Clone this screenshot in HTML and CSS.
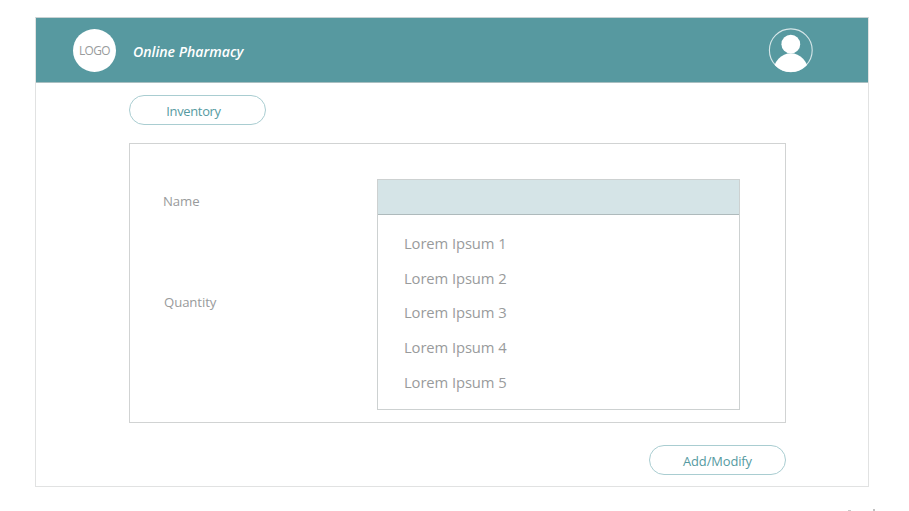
FILE: index.html
```html
<!DOCTYPE html>
<html lang="en">
<head>
<meta charset="utf-8">
<title>Online Pharmacy</title>
<link rel="stylesheet" href="styles.css">
</head>
<body>
<div class="window">
  <header class="header">
    <div class="logo">LOGO</div>
    <h1 class="title">Online Pharmacy</h1>
    <svg class="avatar" viewBox="0 0 46 46" aria-label="Profile">
      <defs><clipPath id="ring"><circle cx="22.8" cy="23.3" r="21.8"/></clipPath></defs>
      <circle cx="22.8" cy="23.3" r="21.4" fill="none" stroke="#d5e6e8" stroke-width="1.1"/>
      <circle cx="22.8" cy="17.2" r="9.4" fill="#fff"/>
      <ellipse cx="22.8" cy="45" rx="17.4" ry="18.8" fill="#fff" clip-path="url(#ring)"/>
    </svg>
  </header>
  <main class="content">
    <button class="pill"><span class="inventory">Inventory</span></button>
    <section class="panel">
      <div class="labels">
        <label class="name">Name</label>
        <label class="quantity">Quantity</label>
      </div>
      <div class="dropdown">
        <div class="field"></div>
        <ul class="options">
          <li>Lorem Ipsum 1</li>
          <li>Lorem Ipsum 2</li>
          <li>Lorem Ipsum 3</li>
          <li>Lorem Ipsum 4</li>
          <li>Lorem Ipsum 5</li>
        </ul>
      </div>
    </section>
    <button class="pill submit"><span class="modify">Add/Modify</span></button>
  </main>
</div>
<footer class="edge"><i class="dash"></i><i class="tick"></i></footer>
</body>
</html>
```
FILE: styles.css
```css
* { box-sizing: border-box; }
body {
  margin: 0;
  height: 511px;
  padding: 17px 40px 0 35px;
  overflow: hidden;
  background: #fff;
  color: #999b9c;
  font-family: "Open Sans", "Noto Sans", sans-serif;
}
.window { height: 470px; border: 1px solid #e1e2e2; border-top-color: #c9d2d3; }
.header {
  display: flex;
  align-items: center;
  height: 65px;
  padding: 0 54px 0 37px;
  background: #5799a0;
  border-bottom: 1px solid #a9bfc1;
}
.logo {
  width: 43px;
  height: 43px;
  margin-top: 1px;
  border-radius: 50%;
  background: #fff;
  font-size: 11.9px;
  letter-spacing: -0.55px;
  line-height: 43px;
  text-align: center;
}
.title {
  margin: 3px 0 0 17px;
  color: #fff;
  font-size: 14.1px;
  font-style: italic;
  font-weight: 600;
  line-height: 20px;
}
.avatar { width: 46px; height: 46px; margin-left: auto; }
.content { display: flex; flex-direction: column; padding: 12px 82px 0 93px; }
.pill {
  display: flex;
  align-items: center;
  justify-content: center;
  width: 137px;
  height: 30px;
  padding: 0;
  border: 1px solid #a9cdd1;
  border-radius: 15px;
  background: #fff;
  color: #559aa1;
  font: 12.9px/18px "Open Sans", "Noto Sans", sans-serif;
  letter-spacing: -0.3px;
}
.inventory { position: relative; left: -4px; top: 1px; }
.modify { position: relative; top: 1px; letter-spacing: -0.1px; }
.panel {
  display: flex;
  height: 280px;
  margin-top: 18px;
  padding: 35px 45px 0 33px;
  border: 1px solid #d1d3d3;
}
.labels {
  display: flex;
  flex-direction: column;
  width: 214px;
  padding-top: 12px;
  font-size: 13.2px;
  letter-spacing: -0.1px;
  line-height: 20px;
}
.quantity { margin: 81px 0 0 1px; }
.dropdown { width: 363px; height: 231px; border: 1px solid #cdd1d1; }
.field { height: 35px; background: #d5e4e7; border-bottom: 1px solid #aebabc; }
.options {
  margin: 0;
  padding: 11px 0 0 26px;
  list-style: none;
  font-size: 14.8px;
  letter-spacing: -0.1px;
  line-height: 34.65px;
}
.submit { align-self: flex-end; margin-top: 22px; }
.edge { display: flex; align-items: flex-end; height: 24px; padding-left: 813px; }
.dash { flex: none; width: 3px; height: 1px; background: #c8c8c8; }
.tick { flex: none; width: 2px; height: 2px; margin-left: 22px; background: #c2c2c2; }
```
